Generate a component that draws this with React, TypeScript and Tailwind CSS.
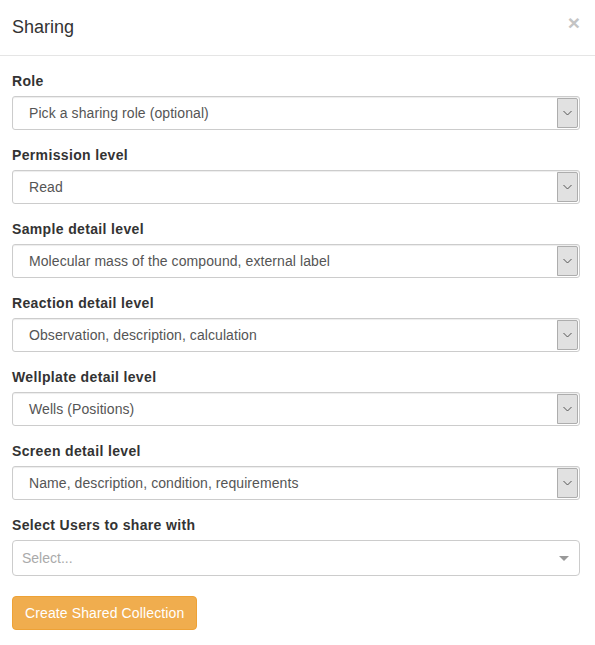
import React from 'react'

const FIELDS = [
  { label: 'Role', value: 'Pick a sharing role (optional)' },
  { label: 'Permission level', value: 'Read' },
  { label: 'Sample detail level', value: 'Molecular mass of the compound, external label' },
  { label: 'Reaction detail level', value: 'Observation, description, calculation' },
  { label: 'Wellplate detail level', value: 'Wells (Positions)' },
  { label: 'Screen detail level', value: 'Name, description, condition, requirements' },
]

function FakeSelect({ value }: { value: string }) {
  return (
    <div className="flex h-[34px] items-stretch rounded-[3px] border border-[#ccc] bg-white shadow-[inset_0_1px_1px_rgba(0,0,0,0.075)]">
      <div className="flex flex-1 items-center pl-[16px] text-[14px] tracking-[0.08px] text-[#555]">{value}</div>
      <div className="m-px flex w-[21px] items-center justify-center rounded-r-[2px] border border-[#adadad] bg-[#e1e1e1]">
        <svg width="9" height="6" viewBox="0 0 9 6" fill="none">
          <path d="M0.5 1 L4.5 5 L8.5 1" stroke="#555" strokeWidth="1" />
        </svg>
      </div>
    </div>
  )
}

export default function App() {
  return (
    <div
      className="h-[645px] w-[595px] overflow-hidden bg-white text-[#333]"
      style={{ fontFamily: '"Liberation Sans", Arial, sans-serif' }}
    >
      {/* Header */}
      <div className="flex h-[56px] items-center justify-between border-b border-[#e5e5e5] pl-3 pr-[15px]">
        <h4 className="-mt-[2px] text-[18px] leading-[26px] text-[#333]">Sharing</h4>
        <span className="-mt-[10px] text-[21px] font-bold leading-none text-[#c4c4c4]">×</span>
      </div>

      {/* Body */}
      <div className="pl-3 pr-[15px] pt-[15px]">
        {FIELDS.map((f) => (
          <div key={f.label} className="mb-[15px]">
            <label className="mb-[5px] block text-[14px] font-bold leading-[20px] tracking-[0.35px]">{f.label}</label>
            <FakeSelect value={f.value} />
          </div>
        ))}

        <div className="mb-[20px]">
          <label className="mb-[5px] block text-[14px] font-bold leading-[20px] tracking-[0.35px]">
            Select Users to share with
          </label>
          <div className="flex h-[36px] items-center justify-between rounded-[4px] border border-[#ccc] bg-white pl-[9px] pr-[10px]">
            <span className="text-[14px] text-[#aaa]">Select...</span>
            <span className="h-0 w-0 border-x-[5px] border-t-[5px] border-x-transparent border-t-[#999]" />
          </div>
        </div>

        <button className="h-[34px] rounded-[4px] border border-[#eea236] bg-[#f0ad4e] px-3 text-[14px] tracking-[0.12px] text-white">
          Create Shared Collection
        </button>
      </div>
    </div>
  )
}
